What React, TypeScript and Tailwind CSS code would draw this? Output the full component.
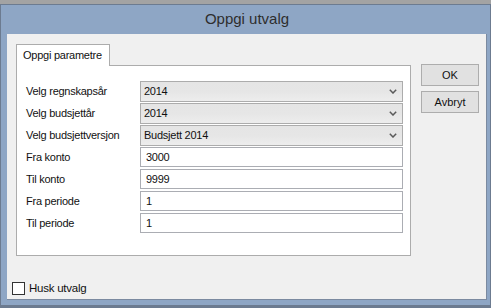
import React from "react";

const combos = [
  { label: "Velg regnskapsår", value: "2014" },
  { label: "Velg budsjettår", value: "2014" },
  { label: "Velg budsjettversjon", value: "Budsjett 2014" },
];

const fields = [
  { label: "Fra konto", value: "3000" },
  { label: "Til konto", value: "9999" },
  { label: "Fra periode", value: "1" },
  { label: "Til periode", value: "1" },
];

// small dropdown arrow of the combobox
const Chevron = () => (
  <svg width="8" height="5" viewBox="0 0 8 5" className="shrink-0">
    <path d="M0.8 0.8 L4 4 L7.2 0.8" fill="none" stroke="#5a5a5a" strokeWidth="1.5" />
  </svg>
);

export default function App() {
  return (
    <div className="w-[491px] h-[308px] bg-[#a3a3a3] pt-[4px] flex flex-col font-['Liberation_Sans',sans-serif] text-[11px] tracking-[-0.25px] text-[#111]">
      {/* window frame */}
      <div className="flex-1 flex flex-col bg-[#8ea6c5] border border-b-[3px] border-[#6c7b90] pl-[6px] pr-[3px] pb-[5px]">
        <div className="h-[29px] flex items-center justify-center text-[15px] tracking-normal text-[#2e2e2e]">Oppgi utvalg</div>

        {/* client area */}
        <div className="flex-1 flex flex-col bg-[#f0f0f0] border-r border-b border-[#7b8aa0]">
          <div className="flex">
            {/* tab control */}
            <div className="ml-[9px] mt-[10px] w-[395px] flex flex-col">
              <div className="relative z-10 -mb-px w-[94px] h-[22px] bg-white border border-b-0 border-[#acacac] flex items-center pl-[6px] whitespace-nowrap">
                Oppgi parametre
              </div>
              <div className="h-[191px] bg-white border border-[#acacac] pt-[15px] pl-[9px] flex flex-col">
                {combos.map((c) => (
                  <div key={c.label} className="h-[22px] flex">
                    <div className="w-[114px] h-[21px] flex items-center whitespace-nowrap">{c.label}</div>
                    <div className="w-[263px] h-[21px] border border-[#acacac] bg-gradient-to-b from-[#e5e5e5] via-[#e6e6e6] to-[#ededed] flex items-center justify-between pl-[3px] pr-[5px]">
                      <span>{c.value}</span>
                      <Chevron />
                    </div>
                  </div>
                ))}
                {fields.map((f) => (
                  <div key={f.label} className="h-[22px] flex">
                    <div className="w-[114px] h-[20px] flex items-center whitespace-nowrap">{f.label}</div>
                    <div className="w-[263px] h-[20px] border border-[#abadb3] bg-white flex items-center pl-[5px]">
                      {f.value}
                    </div>
                  </div>
                ))}
              </div>
            </div>

            {/* buttons */}
            <div className="ml-[10px] mt-[30px] flex flex-col gap-[5px] tracking-normal">
              <button className="w-[58px] h-[22px] bg-[#e1e1e1] border border-[#adadad] flex items-center justify-center">OK</button>
              <button className="w-[58px] h-[22px] bg-[#e1e1e1] border border-[#adadad] flex items-center justify-center">Avbryt</button>
            </div>
          </div>

          {/* remember checkbox */}
          <div className="mt-auto ml-[5px] mb-[2px] flex items-center gap-[4px]">
            <div className="w-[13px] h-[13px] bg-white border border-[#333]" />
            <span className="text-[11.5px]">Husk utvalg</span>
          </div>
        </div>
      </div>
    </div>
  );
}
